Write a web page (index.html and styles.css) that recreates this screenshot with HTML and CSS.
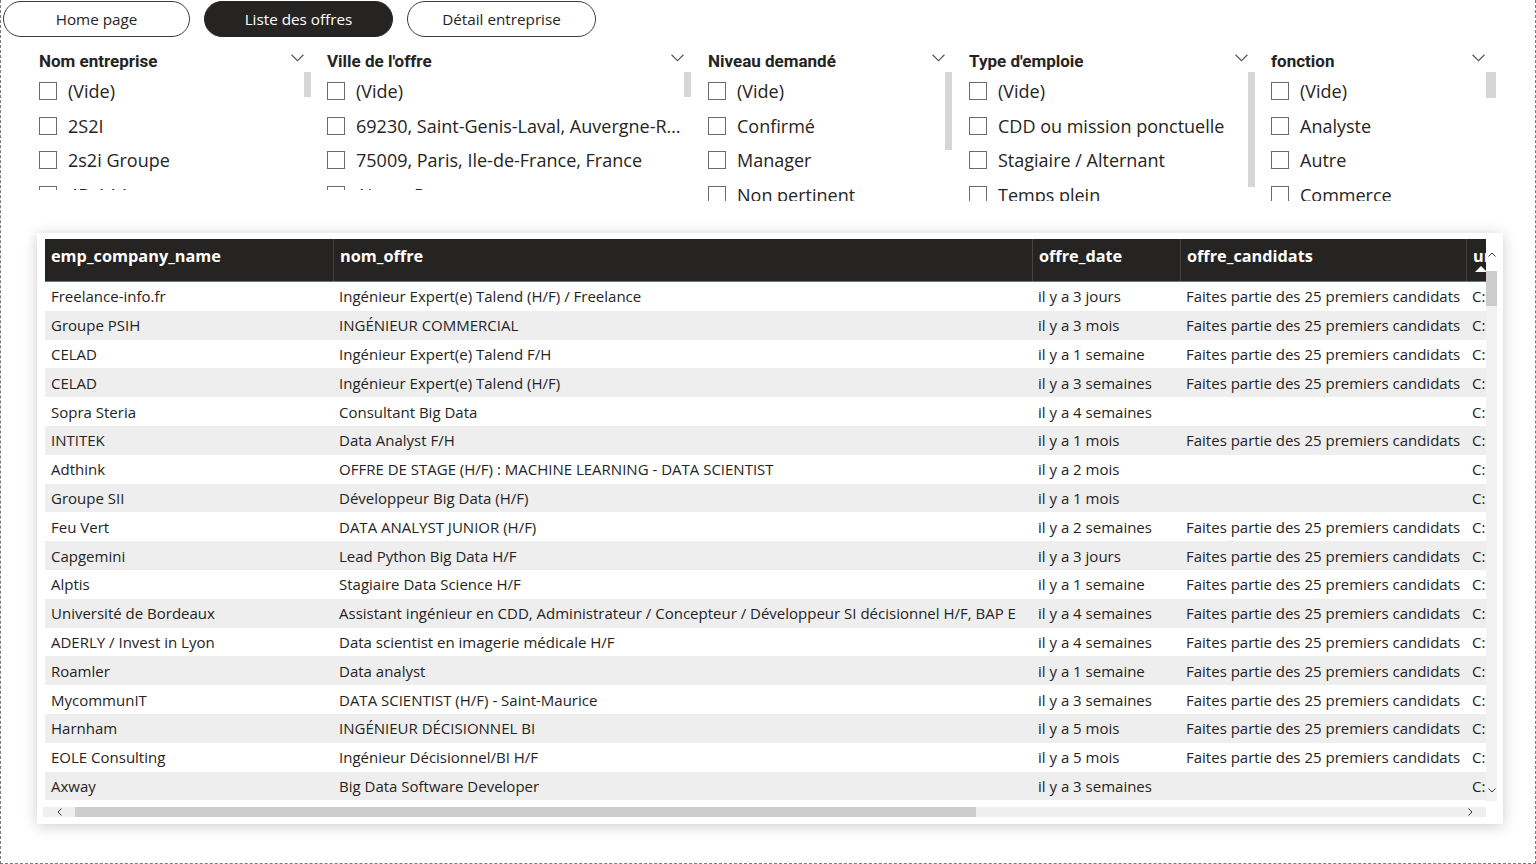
FILE: index.html
```html
<!DOCTYPE html>
<html lang="fr">
<head>
<meta charset="utf-8">
<title>Liste des offres</title>
<link rel="stylesheet" href="styles.css">
</head>
<body>
<div class="page">
  <nav class="nav">
    <button class="nav-btn first">Home page</button>
    <button class="nav-btn active">Liste des offres</button>
    <button class="nav-btn">Détail entreprise</button>
  </nav>

  <section class="slicers">
    <div class="slicer s1">
      <div class="slicer-head"><span>Nom entreprise</span><svg class="chev" viewBox="0 0 12 7"><path d="M0.5 0.5 L6 6 L11.5 0.5"/></svg></div>
      <div class="slicer-list">
        <div class="item"><span class="cb"></span>(Vide)</div>
        <div class="item"><span class="cb"></span>2S2I</div>
        <div class="item"><span class="cb"></span>2s2i Groupe</div>
        <div class="item"><span class="cb"></span>4D AAA</div>
      </div>
      <div class="sb"></div>
    </div>
    <div class="slicer s2">
      <div class="slicer-head"><span>Ville de l'offre</span><svg class="chev" viewBox="0 0 12 7"><path d="M0.5 0.5 L6 6 L11.5 0.5"/></svg></div>
      <div class="slicer-list">
        <div class="item"><span class="cb"></span>(Vide)</div>
        <div class="item"><span class="cb"></span><span class="ell">69230, Saint-Genis-Laval, Auvergne-Rhône-Alpes, France</span></div>
        <div class="item"><span class="cb"></span>75009, Paris, Ile-de-France, France</div>
        <div class="item"><span class="cb"></span>Aix-en-Provence</div>
      </div>
      <div class="sb"></div>
    </div>
    <div class="slicer s3">
      <div class="slicer-head"><span>Niveau demandé</span><svg class="chev" viewBox="0 0 12 7"><path d="M0.5 0.5 L6 6 L11.5 0.5"/></svg></div>
      <div class="slicer-list">
        <div class="item"><span class="cb"></span>(Vide)</div>
        <div class="item"><span class="cb"></span>Confirmé</div>
        <div class="item"><span class="cb"></span>Manager</div>
        <div class="item"><span class="cb"></span>Non pertinent</div>
      </div>
      <div class="sb"></div>
    </div>
    <div class="slicer s4">
      <div class="slicer-head"><span>Type d'emploie</span><svg class="chev" viewBox="0 0 12 7"><path d="M0.5 0.5 L6 6 L11.5 0.5"/></svg></div>
      <div class="slicer-list">
        <div class="item"><span class="cb"></span>(Vide)</div>
        <div class="item"><span class="cb"></span>CDD ou mission ponctuelle</div>
        <div class="item"><span class="cb"></span>Stagiaire / Alternant</div>
        <div class="item"><span class="cb"></span>Temps plein</div>
      </div>
      <div class="sb"></div>
    </div>
    <div class="slicer s5">
      <div class="slicer-head"><span>fonction</span><svg class="chev" viewBox="0 0 12 7"><path d="M0.5 0.5 L6 6 L11.5 0.5"/></svg></div>
      <div class="slicer-list">
        <div class="item"><span class="cb"></span>(Vide)</div>
        <div class="item"><span class="cb"></span>Analyste</div>
        <div class="item"><span class="cb"></span>Autre</div>
        <div class="item"><span class="cb"></span>Commerce</div>
      </div>
      <div class="sb"></div>
    </div>
  </section>

  <section class="card">
    <div class="grid-wrap">
      <div class="viewport">
        <div class="thead">
          <div class="th">emp_company_name</div>
          <div class="th">nom_offre</div>
          <div class="th">offre_date</div>
          <div class="th">offre_candidats</div>
          <div class="th sorted">url</div>
        </div>
        <div class="tbody">
          <div class="tr"><div>Freelance-info.fr</div><div>Ingénieur Expert(e) Talend (H/F) / Freelance</div><div>il y a 3 jours</div><div>Faites partie des 25 premiers candidats</div><div>C:</div></div>
          <div class="tr"><div>Groupe PSIH</div><div>INGÉNIEUR COMMERCIAL</div><div>il y a 3 mois</div><div>Faites partie des 25 premiers candidats</div><div>C:</div></div>
          <div class="tr"><div>CELAD</div><div>Ingénieur Expert(e) Talend F/H</div><div>il y a 1 semaine</div><div>Faites partie des 25 premiers candidats</div><div>C:</div></div>
          <div class="tr"><div>CELAD</div><div>Ingénieur Expert(e) Talend (H/F)</div><div>il y a 3 semaines</div><div>Faites partie des 25 premiers candidats</div><div>C:</div></div>
          <div class="tr"><div>Sopra Steria</div><div>Consultant Big Data</div><div>il y a 4 semaines</div><div></div><div>C:</div></div>
          <div class="tr"><div>INTITEK</div><div>Data Analyst F/H</div><div>il y a 1 mois</div><div>Faites partie des 25 premiers candidats</div><div>C:</div></div>
          <div class="tr"><div>Adthink</div><div>OFFRE DE STAGE (H/F) : MACHINE LEARNING - DATA SCIENTIST</div><div>il y a 2 mois</div><div></div><div>C:</div></div>
          <div class="tr"><div>Groupe SII</div><div>Développeur Big Data (H/F)</div><div>il y a 1 mois</div><div></div><div>C:</div></div>
          <div class="tr"><div>Feu Vert</div><div>DATA ANALYST JUNIOR (H/F)</div><div>il y a 2 semaines</div><div>Faites partie des 25 premiers candidats</div><div>C:</div></div>
          <div class="tr"><div>Capgemini</div><div>Lead Python Big Data H/F</div><div>il y a 3 jours</div><div>Faites partie des 25 premiers candidats</div><div>C:</div></div>
          <div class="tr"><div>Alptis</div><div>Stagiaire Data Science H/F</div><div>il y a 1 semaine</div><div>Faites partie des 25 premiers candidats</div><div>C:</div></div>
          <div class="tr"><div>Université de Bordeaux</div><div>Assistant ingénieur en CDD, Administrateur / Concepteur / Développeur SI décisionnel H/F, BAP E</div><div>il y a 4 semaines</div><div>Faites partie des 25 premiers candidats</div><div>C:</div></div>
          <div class="tr"><div>ADERLY / Invest in Lyon</div><div>Data scientist en imagerie médicale H/F</div><div>il y a 4 semaines</div><div>Faites partie des 25 premiers candidats</div><div>C:</div></div>
          <div class="tr"><div>Roamler</div><div>Data analyst</div><div>il y a 1 semaine</div><div>Faites partie des 25 premiers candidats</div><div>C:</div></div>
          <div class="tr"><div>MycommunIT</div><div>DATA SCIENTIST (H/F) - Saint-Maurice</div><div>il y a 3 semaines</div><div>Faites partie des 25 premiers candidats</div><div>C:</div></div>
          <div class="tr"><div>Harnham</div><div>INGÉNIEUR DÉCISIONNEL BI</div><div>il y a 5 mois</div><div>Faites partie des 25 premiers candidats</div><div>C:</div></div>
          <div class="tr"><div>EOLE Consulting</div><div>Ingénieur Décisionnel/BI H/F</div><div>il y a 5 mois</div><div>Faites partie des 25 premiers candidats</div><div>C:</div></div>
          <div class="tr"><div>Axway</div><div>Big Data Software Developer</div><div>il y a 3 semaines</div><div></div><div>C:</div></div>
        </div>
      </div>
      <div class="vscroll">
        <div class="vs-top"><svg viewBox="0 0 8 5"><path d="M0.5 4.5 L4 1 L7.5 4.5"/></svg></div>
        <div class="vs-thumb"></div>
        <div class="vs-track"><svg viewBox="0 0 8 5"><path d="M0.5 0.5 L4 4 L7.5 0.5"/></svg></div>
      </div>
      <div class="hscroll">
        <div class="hs-btn"><svg viewBox="0 0 5 8"><path d="M4.5 0.5 L1 4 L4.5 7.5"/></svg></div>
        <div class="hs-thumb"></div>
        <div class="hs-track"><svg viewBox="0 0 5 8"><path d="M0.5 0.5 L4 4 L0.5 7.5"/></svg></div>
      </div>
    </div>
  </section>
</div>
</body>
</html>
```

FILE: styles.css
```css
* { box-sizing: border-box; }
html, body { margin: 0; padding: 0; background: #ffffff; }
body { font-family: "Open Sans", "Noto Sans", sans-serif; color: #252423; }

.page {
  width: 1536px;
  height: 864px;
  border-left: 1px dashed #7a7a7a;
  border-right: 1px dashed #7a7a7a;
  border-bottom: 1px dashed #7a7a7a;
  overflow: hidden;
  padding-top: 1px;
}

/* nav */
.nav { display: flex; gap: 14px; padding-left: 2px; }
.nav-btn {
  height: 36px;
  width: 189px;
  border: 1px solid #3c3c3c;
  border-radius: 18px;
  background: #ffffff;
  color: #252423;
  font-family: "Open Sans", sans-serif;
  font-size: 15.25px;
  padding: 0;
  cursor: pointer;
}
.nav-btn.first { width: 187px; }
.nav-btn.active { background: #252423; color: #ffffff; border-color: #252423; }

/* slicers */
.slicers {
  display: flex;
  align-items: flex-start;
  margin-top: 13px;
  padding-left: 38px;
  height: 183px;
}
.slicer {
  display: grid;
  grid-template-columns: 1fr 7px;
  grid-template-rows: 22px auto;
}
.s1 { width: 272px; }
.s2 { width: 364px; margin-left: 16px; }
.s3 { width: 244px; margin-left: 17px; }
.s4 { width: 286px; margin-left: 17px; }
.s5 { width: 225px; margin-left: 16px; grid-template-columns: 1fr 10px; }

.slicer-head {
  grid-column: 1;
  grid-row: 1;
  display: flex;
  align-items: center;
  justify-content: space-between;
  padding-right: 0;
  font-family: "Roboto", sans-serif;
  font-weight: 700;
  font-size: 17px;
  color: #252423;
}
.s5 .slicer-head { padding-right: 1px; }
.chev { width: 13px; height: 8px; margin-top: -6px; }
.chev path { fill: none; stroke: #555; stroke-width: 1; }

.slicer-list {
  grid-column: 1;
  grid-row: 2;
  height: 118px;
  overflow: hidden;
  padding-top: 2px;
}
.s3 .slicer-list, .s4 .slicer-list, .s5 .slicer-list { height: 129px; }
.item {
  height: 34.5px;
  display: flex;
  align-items: center;
  font-size: 18px;
  color: #252423;
  white-space: nowrap;
}
.ell { overflow: hidden; text-overflow: ellipsis; min-width: 0; }
.cb {
  flex: none;
  width: 18px;
  height: 18px;
  border: 1px solid #6b6b6b;
  margin-right: 11px;
}
.sb { grid-column: 2; grid-row: 2; background: #d6d6d6; height: 25px; }
.s3 .sb { height: 78px; }
.s4 .sb { height: 115px; }
.s5 .sb { height: 26px; }

/* table card */
.card {
  margin-left: 36px;
  width: 1466px;
  height: 591px;
  background: #ffffff;
  box-shadow: 0 2px 14px rgba(0, 0, 0, 0.2);
  padding: 6px 6px 7px 8px;
}
.grid-wrap {
  display: grid;
  grid-template-columns: 1441px 11px;
  grid-template-rows: 562px 10px;
  row-gap: 6px;
}
.viewport { overflow: hidden; grid-column: 1; grid-row: 1; }
.thead, .tr {
  display: grid;
  grid-template-columns: 288px 699px 148px 286px 200px;
}
.thead {
  height: 43px;
  background: #252423;
  border-bottom: 1px solid #118dff;
}
.th {
  color: #ffffff;
  font-weight: 700;
  font-size: 16.3px;
  padding: 6px 6px 0;
  border-left: 1px solid #454443;
  white-space: nowrap;
  overflow: hidden;
  position: relative;
}
.th:first-child { border-left: none; }
.th.sorted::after {
  content: "";
  position: absolute;
  left: 8px;
  top: 27px;
  border-left: 6px solid transparent;
  border-right: 6px solid transparent;
  border-bottom: 6px solid #ffffff;
}
.tr { height: 28.8px; font-size: 15px; align-items: center; }
.tr:nth-child(even) { background: #eeeeee; }
.tr > div {
  padding-left: 6px;
  white-space: nowrap;
  overflow: hidden;
}

.vscroll {
  grid-column: 2;
  grid-row: 1;
  display: flex;
  flex-direction: column;
  background: #f2f2f2;
}
.vs-top { height: 32px; background: #ffffff; display: flex; justify-content: center; padding-top: 13px; }
.vs-top svg, .vs-track svg { width: 8px; height: 5px; }
.vs-thumb { height: 35px; background: #cccccc; }
.vs-track { flex: 1; display: flex; justify-content: center; align-items: flex-end; padding-bottom: 8px; }
.vscroll path, .hscroll path { fill: none; stroke: #333; stroke-width: 1; }

.hscroll {
  grid-column: 1;
  grid-row: 2;
  margin-left: -2px;
  display: flex;
  background: #efefef;
  height: 10px;
}
.hs-btn { width: 32px; display: flex; align-items: center; justify-content: center; }
.hs-btn svg, .hs-track svg { width: 5px; height: 8px; }
.hs-thumb { width: 901px; background: #cdcdcd; }
.hs-track { flex: 1; display: flex; align-items: center; justify-content: flex-end; padding-right: 13px; }
```
